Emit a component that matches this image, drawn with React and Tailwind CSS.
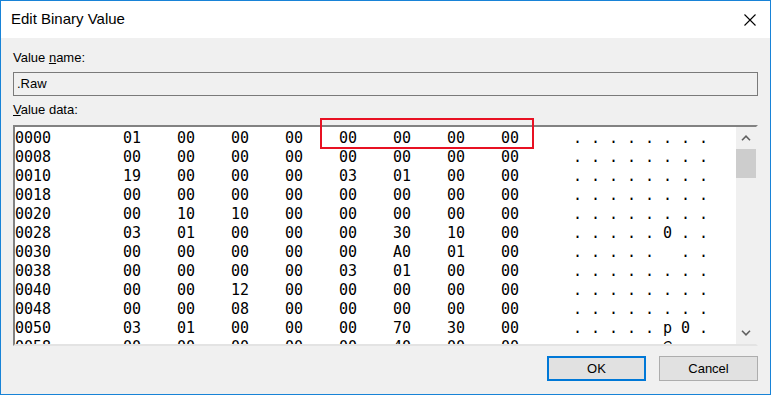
import React from 'react'

const rows = [
    ['0000', ['01', '00', '00', '00', '00', '00', '00', '00'], '........'],
    ['0008', ['00', '00', '00', '00', '00', '00', '00', '00'], '........'],
    ['0010', ['19', '00', '00', '00', '03', '01', '00', '00'], '........'],
    ['0018', ['00', '00', '00', '00', '00', '00', '00', '00'], '........'],
    ['0020', ['00', '10', '10', '00', '00', '00', '00', '00'], '........'],
    ['0028', ['03', '01', '00', '00', '00', '30', '10', '00'], '.....0..'],
    ['0030', ['00', '00', '00', '00', '00', 'A0', '01', '00'], '..... ..'],
    ['0038', ['00', '00', '00', '00', '03', '01', '00', '00'], '........'],
    ['0040', ['00', '00', '12', '00', '00', '00', '00', '00'], '........'],
    ['0048', ['00', '00', '08', '00', '00', '00', '00', '00'], '........'],
    ['0050', ['03', '01', '00', '00', '00', '70', '30', '00'], '.....p0.'],
    ['0058', ['00', '00', '00', '00', '00', '40', '00', '00'], '.....@..'],
]

const mono = "font-['DejaVu_Sans_Mono',monospace] text-[15px] leading-[19px] text-black"

function HexRow({ addr, bytes, ascii }) {
    return (
        <div className={`flex h-[19px] whitespace-pre ${mono}`}>
            <div className="w-[108px]">{addr}</div>
            {bytes.map((b, i) => (
                <div key={i} className="w-[54px]">{b}</div>
            ))}
            <div className="flex ml-[18px]">
                {ascii.split('').map((c, i) => (
                    <div key={i} className="w-[18px]">{c}</div>
                ))}
            </div>
        </div>
    )
}

function Chevron({ down }) {
    return (
        <svg width="10" height="6" viewBox="0 0 10 6" className={down ? 'rotate-180' : ''}>
            <path d="M1 5.2 L5 1.2 L9 5.2" fill="none" stroke="#606060" strokeWidth="1.6" />
        </svg>
    )
}

export default function App() {
    return (
        <div className="w-[771px] h-[395px] border border-[#1883d7] bg-[#f0f0f0] flex flex-col font-['Liberation_Sans',Arial,sans-serif] text-black">
            {/* title bar */}
            <div className="h-[37px] bg-white flex items-center justify-between pl-[10px] pr-[14px]">
                <span className="text-[15px]">Edit Binary Value</span>
                <svg width="12" height="12" viewBox="0 0 12 12">
                    <path d="M0.5 0.5 L11.5 11.5 M11.5 0.5 L0.5 11.5" stroke="#000" strokeWidth="1.1" />
                </svg>
            </div>

            <div className="relative flex flex-col px-[12px] text-[13px]">
                <div className="mt-[12px] leading-[16px]">
                    Value <span className="underline">n</span>ame:
                </div>
                <div className="mt-[6px] h-[24px] border border-[#7a7a7a] bg-[#f0f0f0] flex items-center pl-[3px]">
                    .Raw
                </div>
                <div className="mt-[6px] leading-[16px]">
                    <span className="underline">V</span>alue data:
                </div>

                <div className="relative mt-[7px]">
                    <div className="h-[221px] flex bg-white border-t-2 border-l-2 border-t-[#828282] border-l-[#828282] border-r-2 border-b-2 border-r-[#f0f0f0] border-b-[#e3e3e3]">
                        <div className="flex-1 overflow-hidden pt-[2px]">
                            {rows.map(([a, b, s]) => (
                                <HexRow key={a} addr={a} bytes={b} ascii={s} />
                            ))}
                        </div>
                        <div className="w-[20px] bg-[#f0f0f0] flex flex-col">
                            <div className="h-[22px] flex items-center justify-center">
                                <Chevron />
                            </div>
                            <div className="h-[29px] bg-[#cdcdcd]" />
                            <div className="flex-1" />
                            <div className="h-[22px] flex items-center justify-center">
                                <Chevron down />
                            </div>
                        </div>
                    </div>
                    {/* highlight */}
                    <div className="absolute left-[307px] top-[-7px] w-[214px] h-[31px] border-2 border-[#e81123]" />
                </div>

                <div className="mt-[10px] flex justify-end gap-[13px]">
                    <button className="w-[99px] h-[25px] bg-[#e1e1e1] border-2 border-[#0078d7] text-[13px]">OK</button>
                    <button className="w-[99px] h-[25px] bg-[#e1e1e1] border border-[#adadad] text-[13px]">Cancel</button>
                </div>
            </div>
        </div>
    )
}
